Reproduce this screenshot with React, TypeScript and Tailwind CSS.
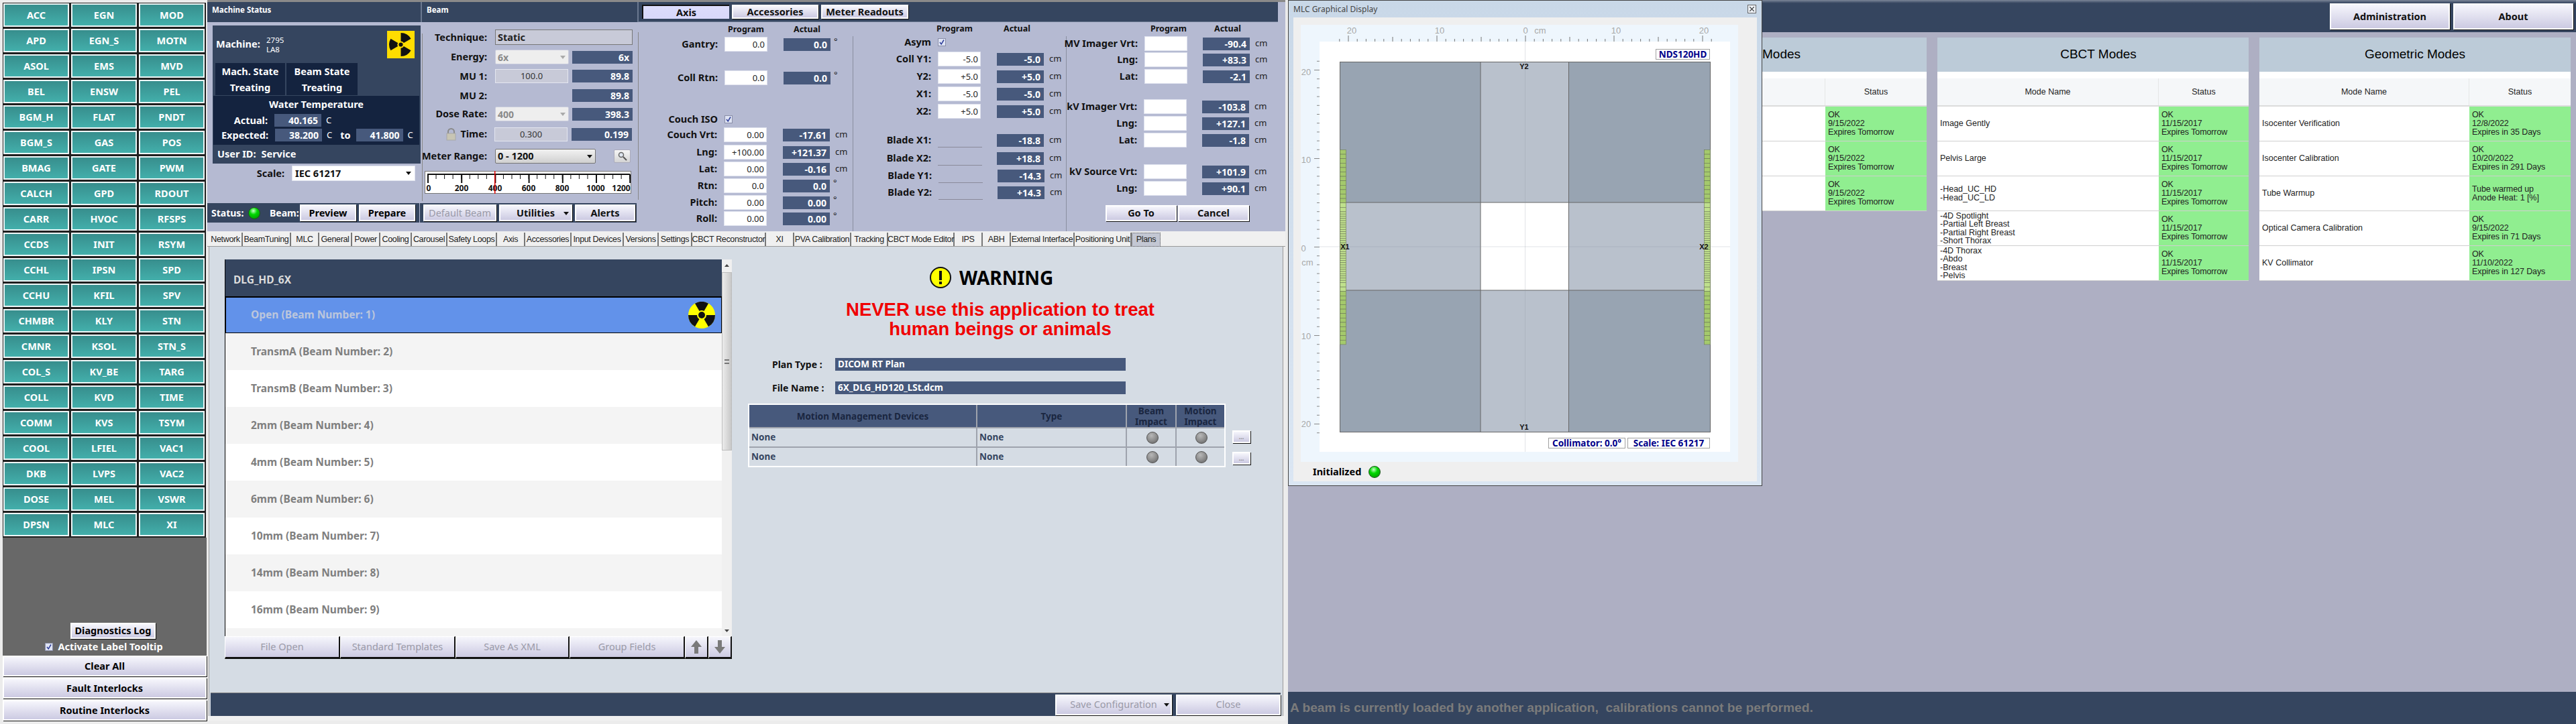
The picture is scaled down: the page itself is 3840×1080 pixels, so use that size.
import React from "react";

const codes = [
  ["ACC", "EGN", "MOD"], ["APD", "EGN_S", "MOTN"], ["ASOL", "EMS", "MVD"], ["BEL", "ENSW", "PEL"],
  ["BGM_H", "FLAT", "PNDT"], ["BGM_S", "GAS", "POS"], ["BMAG", "GATE", "PWM"], ["CALCH", "GPD", "RDOUT"],
  ["CARR", "HVOC", "RFSPS"], ["CCDS", "INIT", "RSYM"], ["CCHL", "IPSN", "SPD"], ["CCHU", "KFIL", "SPV"],
  ["CHMBR", "KLY", "STN"], ["CMNR", "KSOL", "STN_S"], ["COL_S", "KV_BE", "TARG"], ["COLL", "KVD", "TIME"],
  ["COMM", "KVS", "TSYM"], ["COOL", "LFIEL", "VAC1"], ["DKB", "LVPS", "VAC2"], ["DOSE", "MEL", "VSWR"], ["DPSN", "MLC", "XI"],
];

const gbtn = "flex items-center justify-center bg-linear-to-b from-[#f6f6fc] to-[#cccae2] border-2 border-white shadow-[1px_1px_0_#111] font-bold whitespace-nowrap";

function Led({ gray = false }: { gray?: boolean }) {
  return (
    <span
      className={
        gray
          ? "block w-[18px] h-[18px] rounded-full border border-[#555] bg-[radial-gradient(circle_at_40%_30%,#b8b8b8,#8a8a8a_55%,#5f5f5f)]"
          : "block w-[18px] h-[18px] rounded-full border border-[#1a5a1a] bg-[radial-gradient(circle_at_42%_28%,#c8ffc8,#00d800_38%,#008a00)]"
      }
    />
  );
}

function Check() {
  return (
    <svg width="12" height="12" viewBox="0 0 12 12" className="block">
      <rect x="0.5" y="0.5" width="11" height="11" fill="#dfe4f4" stroke="#8a8fa8" />
      <path d="M3 6 L5.2 9 L9 2.5" fill="none" stroke="#2f3f9a" strokeWidth="1.5" />
    </svg>
  );
}

function Arrow({ color = "#111" }: { color?: string }) {
  return (
    <svg width="8" height="5" viewBox="0 0 8 5" className="block">
      <path d="M0 0 H8 L4 5 Z" fill={color} />
    </svg>
  );
}

function Trefoil() {
  const s = (a: number) => {
    const r = (d: number) => (d * Math.PI) / 180;
    const p = (R: number, d: number) => `${20 + R * Math.cos(r(d))} ${20 + R * Math.sin(r(d))}`;
    return `M${p(5, a - 30)} L${p(17, a - 30)} A17 17 0 0 1 ${p(17, a + 30)} L${p(5, a + 30)} A5 5 0 0 0 ${p(5, a - 30)} Z`;
  };
  return (
    <svg width="41" height="41" viewBox="0 0 40 40" className="block">
      <rect width="40" height="40" fill="#ffdd00" />
      {[-60, 60, 180].map((a) => (
        <path key={a} d={s(a)} fill="#111" />
      ))}
      <circle cx="20" cy="20" r="3" fill="#111" />
    </svg>
  );
}

function SmallRad() {
  const r = (d: number) => (d * Math.PI) / 180;
  const sec = (a: number) => {
    const p = (R: number, d: number) => `${20 + R * Math.cos(r(d))} ${20 + R * Math.sin(r(d))}`;
    return `M20 20 L${p(20, a - 30)} A20 20 0 0 1 ${p(20, a + 30)} Z`;
  };
  return (
    <svg width="40" height="40" viewBox="0 0 40 40" className="block">
      <circle cx="20" cy="20" r="20" fill="#ffff00" />
      {[-90, 30, 150].map((a) => (
        <path key={a} d={sec(a)} fill="#111" />
      ))}
      <circle cx="20" cy="20" r="7" fill="#ffff00" />
      <circle cx="20" cy="20" r="5" fill="#111" />
    </svg>
  );
}

function Interlocks() {
  return (
    <div className="w-[309px] shrink-0 h-full flex flex-col pl-1 pt-1 pr-px">
      <div className="flex flex-col">
        {codes.map((row) => (
          <div key={row[0]} className="flex h-[38px]">
            {row.map((c) => (
              <div key={c} className="w-[101px] h-[38px] border-r-2 border-b-2 border-l-[1px] border-t-[1px] border-[#1f1f1f]">
                <div className="h-full bg-linear-to-b from-[#378e8d] to-[#43afab] border-2 border-[#eef7f7] flex items-center justify-center font-bold text-[14.5px] text-white">
                  {c}
                </div>
              </div>
            ))}
          </div>
        ))}
      </div>
      <div className="flex-1 bg-[#686868] flex flex-col items-center justify-end">
        <div className={`${gbtn} w-[127px] h-[24px] ml-[25px] text-[14.5px] text-black`}>Diagnostics Log</div>
        <div className="flex items-center mt-[4px] mb-[5px] h-[16px] gap-[7px] -ml-[2px] text-white font-bold text-[14.5px]">
          <Check />
          <span>Activate Label Tooltip</span>
        </div>
      </div>
      <div className="flex flex-col gap-[2px] mb-[5px]">
        <div className={`${gbtn} h-[31px] text-[14.5px] text-black`}>Clear All</div>
        <div className={`${gbtn} h-[31px] text-[14.5px] text-black`}>Fault Interlocks</div>
        <div className={`${gbtn} h-[31px] text-[14.5px] text-black`}>Routine Interlocks</div>
      </div>
    </div>
  );
}

function MachineCol() {
  return (
    <div className="w-[320px] shrink-0 flex flex-col">
      <div className="h-[30px] bg-[#35455f] border-r-2 border-[#6a7890] pl-[7px] pt-[3px] text-[11.5px] font-bold text-white">Machine Status</div>
      <div className="ml-[8px] mt-[5px] w-[310px] h-[206px] bg-[#35455f] flex flex-col text-white font-bold">
        <div className="h-[56px] flex items-center pl-[5px] pr-[9px]">
          <span className="text-[14.5px] w-[75px]">Machine:</span>
          <div className="flex flex-col gap-[1px] flex-1 font-normal text-[11.5px] leading-[13px]">
            <span>2795</span>
            <span>LA8</span>
          </div>
          <Trefoil />
        </div>
        <div className="flex ml-[4px] gap-[2px] h-[48px]">
          <div className="w-[104px] bg-[#14233f] flex flex-col items-center justify-center gap-[6px] text-[14.5px] leading-[18px]">
            <span>Mach. State</span>
            <span>Treating</span>
          </div>
          <div className="w-[106px] bg-[#14233f] flex flex-col items-center justify-center gap-[6px] text-[14.5px] leading-[18px]">
            <span>Beam State</span>
            <span>Treating</span>
          </div>
        </div>
        <div className="mt-px ml-px w-[307px] h-[73px] bg-[#14233f] text-[14.5px] flex flex-col">
          <div className="h-[26px] flex items-center justify-center">Water Temperature</div>
          <div className="flex items-center h-[21px]">
            <span className="w-[81px] text-right">Actual:</span>
            <span className="ml-[10px] w-[70px] h-[19px] bg-[#47597c] text-right pr-[5px] leading-[19px] text-[14px]">40.165</span>
            <span className="ml-[7px] font-normal text-[13px]">C</span>
          </div>
          <div className="flex items-center h-[23px]">
            <span className="w-[82px] text-right">Expected:</span>
            <span className="ml-[10px] w-[70px] h-[19px] bg-[#47597c] text-right pr-[5px] leading-[19px] text-[14px]">38.200</span>
            <span className="ml-[7px] font-normal text-[13px]">C</span>
            <span className="ml-[12px]">to</span>
            <span className="ml-[8px] w-[70px] h-[19px] bg-[#47597c] text-right pr-[5px] leading-[19px] text-[14px]">41.800</span>
            <span className="ml-[7px] font-normal text-[13px]">C</span>
          </div>
        </div>
        <div className="flex-1 flex items-center pl-[7px] gap-[8px] text-[14.5px]">
          <span>User ID:</span>
          <span>Service</span>
        </div>
      </div>
      <div className="flex items-center h-[23px] mt-[3px]">
        <span className="w-[115px] text-right font-bold text-[14.5px] text-[#111]">Scale:</span>
        <div className="ml-[11px] w-[184px] h-[23px] bg-white border border-[#dfe2ee] flex items-center justify-between pl-[4px] pr-[5px] font-bold text-[14.5px] text-[#111]">
          <span>IEC 61217</span>
          <Arrow />
        </div>
      </div>
      <div className="mt-[33px] w-[316px] h-[29px] bg-[#35455f] flex items-center text-white font-bold text-[14px]">
        <span className="ml-[6px] w-[55px]">Status:</span>
        <Led />
        <span className="ml-[14px] w-[45px] whitespace-nowrap">Beam:</span>
        <div className={`${gbtn} w-[84px] h-[25px] text-black text-[14.5px]`}>Preview</div>
        <div className={`${gbtn} ml-[4px] w-[84px] h-[25px] text-black text-[14.5px]`}>Prepare</div>
      </div>
    </div>
  );
}

function Drop({ children }: { children: React.ReactNode }) {
  return (
    <div className="w-[110px] h-[22px] bg-[#eeeeee] border border-[#c8cbdc] rounded-[2px] flex items-center justify-between pl-[3px] pr-[4px] text-[#8a8a8a] font-bold text-[14px]">
      <span>{children}</span>
      <Arrow color="#aaaaaa" />
    </div>
  );
}

const beamLabel = "w-[97px] shrink-0 flex justify-end whitespace-nowrap font-bold text-[14.5px] text-[#111]";
const beamVal = "ml-[5px] w-[90px] h-[19px] bg-[#47597c] text-white font-bold text-[14px] text-right pr-[5px] leading-[19px]";

function MeterScale() {
  const majors = [0, 1, 2, 3, 4, 5, 6];
  const labels: [string, number][] = [["0", 6], ["200", 55], ["400", 105], ["600", 155], ["800", 205], ["1000", 255], ["1200", 293]];
  return (
    <svg width="308" height="34" className="block ml-[4px] mt-[11px]">
      <rect x="0.5" y="0.5" width="307" height="33" fill="#fff" stroke="#777" />
      <rect x="4" y="4" width="302" height="2" fill="#111" />
      {Array.from({ length: 25 }, (_, i) => (
        <rect key={i} x={4 + i * 12.55} y="5" width="1" height="7" fill="#111" />
      ))}
      {majors.map((i) => (
        <rect key={i} x={4 + i * 50.2} y="5" width="2" height="13" fill="#111" />
      ))}
      {labels.map(([t, x]) => (
        <text key={t} x={x} y="30" textAnchor="middle" fontSize="12" fontWeight="700" fontFamily="Noto Sans" fill="#111">
          {t}
        </text>
      ))}
      <rect x="104" y="0" width="1.5" height="34" fill="#e00000" />
    </svg>
  );
}

function BeamCol() {
  return (
    <div className="w-[323px] shrink-0 flex flex-col">
      <div className="h-[30px] bg-[#35455f] border-r-2 border-[#6a7890] pl-[7px] pt-[3px] text-[11.5px] font-bold text-white">Beam</div>
      <div className="h-[270px] relative">
        <div className="flex items-center h-[23px] mt-[11px]">
          <span className={beamLabel}>Technique:</span>
          <div className="ml-[12px] w-[205px] h-[23px] bg-[#c8cad8] border border-[#777] pl-[3px] font-bold text-[14.5px] text-[#222] leading-[21px]">Static</div>
        </div>
        <div className="flex items-center h-[22px] mt-[7px]">
          <span className={beamLabel}>Energy:</span>
          <div className="ml-[12px]"><Drop>6x</Drop></div>
          <span className={beamVal}>6x</span>
        </div>
        <div className="flex items-center h-[21px] mt-[7px]">
          <span className={beamLabel}>MU 1:</span>
          <div className="ml-[12px] w-[109px] h-[21px] bg-[#c8cad8] border border-[#e4e6f0] text-center text-[13px] text-[#333] leading-[19px]">100.0</div>
          <span className="ml-[6px] w-[90px] h-[19px] bg-[#47597c] text-white font-bold text-[14px] text-right pr-[5px] leading-[19px]">89.8</span>
        </div>
        <div className="flex items-center h-[19px] mt-[9px]">
          <span className={beamLabel}>MU 2:</span>
          <span className="ml-[127px] w-[90px] h-[19px] bg-[#47597c] text-white font-bold text-[14px] text-right pr-[5px] leading-[19px]">89.8</span>
        </div>
        <div className="flex items-center h-[22px] mt-[7px]">
          <span className={beamLabel}>Dose Rate:</span>
          <div className="ml-[12px]"><Drop>400</Drop></div>
          <span className={beamVal}>398.3</span>
        </div>
        <div className="flex items-center h-[22px] mt-[8px]">
          <svg width="15" height="19" viewBox="0 0 15 19" className="ml-[36px] block">
            <path d="M3 9 V5.5 a4.5 4.5 0 0 1 9 0 V9" fill="none" stroke="#8a8a8a" strokeWidth="2" />
            <rect x="1" y="8" width="13" height="10" fill="#c8c5b4" stroke="#a8a8a8" />
          </svg>
          <span className="w-[46px] text-right font-bold text-[14.5px] text-[#111]">Time:</span>
          <div className="ml-[11px] w-[109px] h-[21px] bg-[#c8cad8] border border-[#e4e6f0] text-center text-[13px] text-[#333] leading-[19px]">0.300</div>
          <span className="ml-[6px] w-[90px] h-[19px] bg-[#47597c] text-white font-bold text-[14px] text-right pr-[5px] leading-[19px]">0.199</span>
        </div>
        <div className="flex items-center h-[22px] mt-[11px]">
          <span className={beamLabel}>Meter Range:</span>
          <div className="ml-[12px] w-[150px] h-[22px] rounded-[2px] border border-[#777] bg-linear-to-b from-[#f2f2f2] to-[#d0d0d0] flex items-center justify-between pl-[3px] pr-[4px] font-bold text-[14.5px] text-[#111]">
            <span>0 - 1200</span>
            <Arrow />
          </div>
          <div className="ml-[27px] w-[25px] h-[20px] rounded-[2px] border border-[#aab] bg-linear-to-b from-[#f6f6f6] to-[#d4d4d4] flex items-center justify-center">
            <svg width="14" height="14" viewBox="0 0 14 14">
              <circle cx="5" cy="5" r="3.5" fill="#dfe6f0" stroke="#666" strokeWidth="1.5" />
              <path d="M8 8 L13 13" stroke="#555" strokeWidth="2" />
            </svg>
          </div>
        </div>
        <MeterScale />
        <div className="absolute left-0 top-[17px] h-[250px] w-px bg-[#888]" />
        <div className="absolute right-0 top-[15px] h-[250px] w-px bg-[#888]" />
      </div>
      <div className="-ml-[3px] mt-auto mb-[13px] h-[29px] bg-[#35455f] flex items-center w-[323px] pl-[5px]">
        <div className={`${gbtn} w-[109px] h-[25px] text-[#9a9aa8] font-normal text-[14.5px]`}>Default Beam</div>
        <div className={`${gbtn} ml-[4px] w-[109px] h-[25px] text-[#111] text-[14.5px] relative`}>
          <span>Utilities</span>
          <span className="absolute right-[3px] top-[9px]"><Arrow /></span>
        </div>
        <div className={`${gbtn} ml-[4px] w-[90px] h-[25px] text-[#111] text-[14.5px]`}>Alerts</div>
      </div>
    </div>
  );
}

type RowProps = { label?: string; lw: string; input?: string; val?: string; unit?: string; mt: string; check?: boolean; under?: boolean; vw?: string; gap?: string };

function AxRow({ label, lw, input, val, unit, mt, check, under, vw = "w-[70px]", gap = "ml-[24px]" }: RowProps) {
  return (
    <div className={`flex items-center h-[22px] ${mt}`}>
      <span className={`${lw} shrink-0 flex justify-end whitespace-nowrap font-bold text-[14.5px] text-[#111]`}>{label}</span>
      {check ? (
        <div className="ml-[10px]"><Check /></div>
      ) : under ? (
        <div className="ml-[10px] w-[66px] h-[22px] border-b border-[#8a8a9a]" />
      ) : (
        <div className="ml-[10px] w-[64px] h-[22px] bg-white border border-[#dfe2ee] text-right pr-[3px] text-[13px] leading-[20px] text-[#222]">{input}</div>
      )}
      {val !== undefined && (
        <span className={`${under ? "ml-[22px]" : gap} ${vw} h-[19px] bg-[#47597c] text-white font-bold text-[14px] text-right pr-[5px] leading-[19px]`}>{val}</span>
      )}
      {unit === "cm" && <span className="ml-[8px] text-[13px] text-[#222]">cm</span>}
      {unit === "deg" && <span className="ml-[5px] text-[13px] text-[#222] -mt-[8px]">°</span>}
    </div>
  );
}

function ColHead({ a, b, h, pa, pb }: { a: string; b: string; h: string; pa: string; pb: string }) {
  return (
    <div className={`flex items-center ${h} font-bold text-[12.5px] text-[#111]`}>
      <span className={pa}>{a}</span>
      <span className={pb}>{b}</span>
    </div>
  );
}

function AxisCol() {
  return (
    <div className="flex-1 flex flex-col relative">
      <div className="h-[30px] bg-[#35455f] w-[953px] flex items-center pl-[5px] gap-[4px] border-b border-[#6a7890]">
        <div className="w-[130px] h-[21px] bg-linear-to-b from-[#dcdcfc] to-[#d8d8fa] border-l-2 border-t-2 border-[#111] flex items-center justify-center font-bold text-[14.5px] text-[#111]">Axis</div>
        <div className={`${gbtn} w-[129px] h-[21px] text-[14.5px] text-[#111]`}>Accessories</div>
        <div className={`${gbtn} w-[130px] h-[21px] text-[14.5px] text-[#111]`}>Meter Readouts</div>
      </div>
      <div className="flex flex-1">
        <div className="w-[319px] pt-[1px]">
          <ColHead a="Program" b="Actual" h="h-[21px]" pa="ml-[133px] w-[98px]" pb="" />
          <AxRow label="Gantry:" lw="w-[118px]" input="0.0" val="0.0" unit="deg" mt="" />
          <AxRow label="Coll Rtn:" lw="w-[118px]" input="0.0" val="0.0" unit="deg" mt="mt-[28px]" />
          <AxRow label="Couch ISO" lw="w-[118px]" check mt="mt-[40px]" />
          <AxRow label="Couch Vrt:" lw="w-[117px]" input="0.00" val="-17.61" unit="cm" mt="mt-px" />
          <AxRow label="Lng:" lw="w-[117px]" input="+100.00" val="+121.37" unit="cm" mt="mt-[4px]" />
          <AxRow label="Lat:" lw="w-[117px]" input="0.00" val="-0.16" unit="cm" mt="mt-[3px]" />
          <AxRow label="Rtn:" lw="w-[117px]" input="0.0" val="0.0" unit="deg" mt="mt-[3px]" />
          <AxRow label="Pitch:" lw="w-[117px]" input="0.00" val="0.00" unit="deg" mt="mt-[3px]" />
          <AxRow label="Roll:" lw="w-[117px]" input="0.00" val="0.00" unit="deg" mt="mt-[2px]" />
        </div>
        <div className="w-[318px] pt-[1px] border-l border-[#8a8fa0] h-[291px] mt-[21px]">
          <div className="-mt-[21px]">
            <ColHead a="Program" b="Actual" h="h-[18px]" pa="ml-[124px] w-[100px]" pb="" />
          </div>
          <AxRow label="Asym" lw="w-[116px]" check mt="mt-[0px]" />
          <AxRow label="Coll Y1:" lw="w-[116px]" input="-5.0" val="-5.0" unit="cm" mt="mt-[3px]" />
          <AxRow label="Y2:" lw="w-[116px]" input="+5.0" val="+5.0" unit="cm" mt="mt-[4px]" />
          <AxRow label="X1:" lw="w-[116px]" input="-5.0" val="-5.0" unit="cm" mt="mt-[4px]" />
          <AxRow label="X2:" lw="w-[116px]" input="+5.0" val="+5.0" unit="cm" mt="mt-[4px]" />
          <AxRow label="Blade X1:" lw="w-[116px]" under val="-18.8" unit="cm" mt="mt-[21px]" />
          <AxRow label="Blade X2:" lw="w-[116px]" under val="+18.8" unit="cm" mt="mt-[5px]" />
          <AxRow label="Blade Y1:" lw="w-[117px]" under val="-14.3" unit="cm" mt="mt-[4px]" />
          <AxRow label="Blade Y2:" lw="w-[117px]" under val="+14.3" unit="cm" mt="mt-[3px]" />
        </div>
        <div className="flex-1 border-l border-[#8a8fa0] h-[291px] mt-[21px]">
          <div className="-mt-[21px]">
            <ColHead a="Program" b="Actual" h="h-[21px]" pa="ml-[125px] w-[95px]" pb="" />
          </div>
          <AxRow label="MV Imager Vrt:" lw="w-[106px]" input="" val="-90.4" unit="cm" gap="ml-[23px]" mt="" />
          <AxRow label="Lng:" lw="w-[106px]" input="" val="+83.3" unit="cm" gap="ml-[23px]" mt="mt-[2px]" />
          <AxRow label="Lat:" lw="w-[106px]" input="" val="-2.1" unit="cm" gap="ml-[23px]" mt="mt-[3px]" />
          <AxRow label="kV Imager Vrt:" lw="w-[105px]" input="" val="-103.8" unit="cm" gap="ml-[23px]" mt="mt-[23px]" />
          <AxRow label="Lng:" lw="w-[105px]" input="" val="+127.1" unit="cm" gap="ml-[23px]" mt="mt-[3px]" />
          <AxRow label="Lat:" lw="w-[105px]" input="" val="-1.8" unit="cm" gap="ml-[23px]" mt="mt-[3px]" />
          <AxRow label="kV Source Vrt:" lw="w-[105px]" input="" val="+101.9" unit="cm" gap="ml-[23px]" mt="mt-[25px]" />
          <AxRow label="Lng:" lw="w-[105px]" input="" val="+90.1" unit="cm" gap="ml-[23px]" mt="mt-[3px]" />
          <div className="flex ml-[58px] mt-[14px] gap-[2px]">
            <div className={`${gbtn} w-[106px] h-[24px] text-[14.5px] text-[#111]`}>Go To</div>
            <div className={`${gbtn} w-[106px] h-[24px] text-[14.5px] text-[#111]`}>Cancel</div>
          </div>
        </div>
      </div>
    </div>
  );
}

const tabs: [string, string][] = [
  ["Network", "w-[50px]"], ["BeamTuning", "w-[72px]"], ["MLC", "w-[42px]"], ["General", "w-[49px]"], ["Power", "w-[42px]"],
  ["Cooling", "w-[47px]"], ["Carousel", "w-[53px]"], ["Safety Loops", "w-[74px]"], ["Axis", "w-[42px]"], ["Accessories", "w-[69px]"],
  ["Input Devices", "w-[78px]"], ["Versions", "w-[52px]"], ["Settings", "w-[50px]"], ["CBCT Reconstructor", "w-[110px]"], ["XI", "w-[42px]"],
  ["PVA Calibration", "w-[85px]"], ["Tracking", "w-[55px]"], ["CBCT Mode Editor", "w-[99px]"], ["IPS", "w-[42px]"], ["ABH", "w-[42px]"],
  ["External Interface", "w-[95px]"], ["Positioning Unit", "w-[85px]"],
];

function Tabs() {
  return (
    <div className="h-[23px] bg-[#f0f0f0] flex pl-[3px] border-b border-[#9a9a9a] font-['Liberation_Sans'] text-[12.5px] tracking-[-0.35px] text-[#222]">
      {tabs.map(([t, w]) => (
        <div key={t} className={`${w} h-[20px] mt-[2px] border-r-2 border-[#777] flex items-center justify-center whitespace-nowrap`}>
          {t}
        </div>
      ))}
      <div className="w-[43px] h-[21px] mt-[2px] bg-[#c3c7d3] border border-dotted border-[#555] flex items-center justify-center">Plans</div>
    </div>
  );
}

const beams = [
  ["TransmA (Beam Number: 2)", "bg-[#f4f4f4]"], ["TransmB (Beam Number: 3)", "bg-white"], ["2mm (Beam Number: 4)", "bg-[#f4f4f4]"],
  ["4mm (Beam Number: 5)", "bg-white"], ["6mm (Beam Number: 6)", "bg-[#f4f4f4]"], ["10mm (Beam Number: 7)", "bg-white"],
  ["14mm (Beam Number: 8)", "bg-[#f4f4f4]"], ["16mm (Beam Number: 9)", "bg-white"],
];

const fileBtn = "flex items-center justify-center bg-linear-to-b from-[#f6f6fc] to-[#cccae2] border border-white border-b-[3px] border-b-[#111] border-r-2 border-r-[#111] h-[34px] font-normal text-[14.5px] text-[#9a9aa8]";

function PlanList() {
  return (
    <div className="w-[756px] ml-[23px] mt-[19px] shrink-0 flex flex-col">
      <div className="flex h-[562px]">
        <div className="w-[741px] border-l border-black flex flex-col font-bold text-[15.5px]">
          <div className="h-[56px] shrink-0 bg-[#35455f] border-b border-black pl-[12px] pt-[19px] text-[#dcdcdc]">DLG_HD_6X</div>
          <div className="h-[54px] shrink-0 bg-[#6292ea] border border-black flex items-center pl-[37px] pr-[9px] justify-between text-[#bcc6dc]">
            <span>Open (Beam Number: 1)</span>
            <SmallRad />
          </div>
          {beams.map(([t, c]) => (
            <div key={t} className={`h-[55px] shrink-0 ${c} flex items-center pl-[38px] text-[#7f7f7f]`}>{t}</div>
          ))}
          <div className="flex-1 bg-[#f4f4f4]" />
        </div>
        <div className="w-[15px] bg-[#f0f0f0] flex flex-col items-center relative">
          <svg width="7" height="4" viewBox="0 0 7 4" className="block mt-[7px]"><path d="M3.5 0 L7 4 H0 Z" fill="#444" /></svg>
          <div className="w-[15px] h-[266px] mt-[8px] bg-linear-to-r from-[#ececec] to-[#c8c8c8] border border-[#bdbdbd] flex items-center justify-center">
            <div className="w-[7px] h-[7px] border-y-2 border-[#777]" />
          </div>
          <svg width="7" height="4" viewBox="0 0 7 4" className="block mt-auto mb-[6px]"><path d="M0 0 H7 L3.5 4 Z" fill="#444" /></svg>
        </div>
      </div>
      <div className="flex gap-0">
        <div className={`${fileBtn} w-[172px]`}>File Open</div>
        <div className={`${fileBtn} w-[172px]`}>Standard Templates</div>
        <div className={`${fileBtn} w-[170px]`}>Save As XML</div>
        <div className={`${fileBtn} w-[172px]`}>Group Fields</div>
        <div className={`${fileBtn} w-[35px]`}>
          <svg width="16" height="20" viewBox="0 0 16 20"><path d="M8 0 L16 10 H11 V20 H5 V10 H0 Z" fill="#7a7a7a" /></svg>
        </div>
        <div className={`${fileBtn} w-[35px]`}>
          <svg width="16" height="20" viewBox="0 0 16 20"><path d="M8 20 L16 10 H11 V0 H5 V10 H0 Z" fill="#7a7a7a" /></svg>
        </div>
      </div>
    </div>
  );
}

function Warn() {
  const head = "bg-[#47597c] flex items-center justify-center text-center text-[#1a2640] font-bold text-[13.5px] leading-[16px]";
  const cell = "bg-[#d5dce4] flex items-center pl-[3px] text-[#35455f] font-bold text-[13.5px]";
  return (
    <div className="flex-1 flex flex-col">
      <div className="flex items-center ml-[295px] mt-[30px] h-[32px] gap-[12px]">
        <svg width="32" height="32" viewBox="0 0 32 32" className="block">
          <circle cx="16" cy="16" r="15" fill="#ffff00" stroke="#111" strokeWidth="2" />
          <rect x="14" y="6" width="4" height="14" fill="#111" />
          <rect x="14" y="22" width="4" height="4" fill="#111" />
        </svg>
        <span className="font-bold text-[28px] text-black">WARNING</span>
      </div>
      <div className="mt-[17px] w-[800px] text-center font-['Liberation_Sans'] font-bold text-[27.5px] leading-[29px] text-[#f00000]">
        <div>NEVER use this application to treat</div>
        <div>human beings or animals</div>
      </div>
      <div className="flex items-center mt-[29px] h-[19px]">
        <span className="ml-[60px] w-[94px] font-bold text-[14px] text-[#111]">Plan Type :</span>
        <span className="w-[433px] h-[19px] bg-[#47597c] text-white font-bold text-[13.5px] pl-[4px] leading-[19px]">DICOM RT Plan</span>
      </div>
      <div className="flex items-center mt-[16px] h-[19px]">
        <span className="ml-[60px] w-[94px] font-bold text-[14px] text-[#111]">File Name :</span>
        <span className="w-[433px] h-[19px] bg-[#47597c] text-white font-bold text-[13.5px] pl-[4px] leading-[19px]">6X_DLG_HD120_LSt.dcm</span>
      </div>
      <div className="flex ml-[24px] mt-[14px]">
        <div className="w-[712px] h-[95px] border-2 border-white bg-[#9ea3ad] grid grid-cols-[338px_221px_72px_1fr] grid-rows-[33px_1fr_1fr] gap-[2px]">
          <div className={head}>Motion Management Devices</div>
          <div className={head}>Type</div>
          <div className={head}>Beam<br />Impact</div>
          <div className={head}>Motion<br />Impact</div>
          <div className={cell}>None</div>
          <div className={cell}>None</div>
          <div className={`${cell} justify-center pl-0`}><Led gray /></div>
          <div className={`${cell} justify-center pl-0`}><Led gray /></div>
          <div className={cell}>None</div>
          <div className={cell}>None</div>
          <div className={`${cell} justify-center pl-0`}><Led gray /></div>
          <div className={`${cell} justify-center pl-0`}><Led gray /></div>
        </div>
        <div className="ml-[10px] flex flex-col pt-[40px] gap-[13px]">
          <div className={`${gbtn} w-[27px] h-[19px] text-[9px] text-[#888]`}>...</div>
          <div className={`${gbtn} w-[27px] h-[19px] text-[9px] text-[#888]`}>...</div>
        </div>
      </div>
    </div>
  );
}

function Main() {
  return (
    <div className="w-[1607px] shrink-0 h-full flex flex-col">
      <div className="h-[3px] bg-[#8a8a8a]" />
      <div className="h-[342px] bg-[#b5bad2] flex">
        <MachineCol />
        <BeamCol />
        <AxisCol />
      </div>
      <Tabs />
      <div className="ml-[2px] mr-[3px] border-l border-r border-[#9a9a9a] flex-1 flex flex-col bg-[#d5dce4]">
        <div className="flex-1 flex">
          <PlanList />
          <Warn />
        </div>
        <div className="ml-[2px] mr-[3px] h-[35px] bg-[#35455f] border-t border-[#8a8a8a] flex items-center justify-end gap-[6px] pr-0">
          <div className={`${gbtn} w-[174px] h-[31px] text-[14.5px] text-[#9a9aa8] font-normal relative`}>
            <span>Save Configuration</span>
            <span className="absolute right-[2px] top-[11px]"><Arrow /></span>
          </div>
          <div className={`${gbtn} w-[156px] h-[31px] text-[14.5px] text-[#9a9aa8] font-normal`}>Close</div>
        </div>
      </div>
      <div className="h-[12px] mt-0 border-t-[7px] border-t-[#f0f0f0] bg-[#ececec]" />
    </div>
  );
}

function Chart() {
  const cx = 334.5;
  const cy = 331;
  const tick = (n: number) => (n % 10 === 0 ? 9 : n % 5 === 0 ? 7 : 4);
  const ns = Array.from({ length: 43 }, (_, i) => i - 21);
  const leaves: { y: number; h: number }[] = [];
  let y = 186.5;
  for (let i = 0; i < 60; i++) {
    const h = i < 14 || i >= 46 ? 6.6 : 3.3;
    leaves.push({ y, h });
    y += h;
  }
  const gray = { fill: "#a8a8a8", fontFamily: "Liberation Sans", fontSize: 13 };
  const Lbl = ({ x, t, b }: { x: number; t: string; b: number }) => (
    <text x={x} y={b} textAnchor="middle" {...gray}>{t}</text>
  );
  const Bl = ({ x, yy, t }: { x: number; yy: number; t: string }) => (
    <text x={x} y={yy} textAnchor="middle" fontFamily="Liberation Sans" fontWeight="700" fontSize="11" fill="#111">{t}</text>
  );
  return (
    <svg width="652" height="652" className="block">
      <rect width="652" height="652" fill="#eef6fd" />
      <rect x="28" y="25" width="612" height="612" fill="#fff" />
      <rect x="58.5" y="55.5" width="552" height="552" fill="#98a4b2" />
      <rect x="268" y="55.5" width="131.5" height="552" fill="#b9c1cc" />
      <rect x="58.5" y="265" width="552" height="131" fill="#b9c1cc" />
      <rect x="268" y="265" width="131.5" height="131" fill="#fff" />
      <rect x="58.5" y="55.5" width="552" height="552" fill="none" stroke="#666" />
      <path d="M268 55.5 V607.5 M399.5 55.5 V607.5 M58.5 265 H610.5 M58.5 396 H610.5" stroke="#666" fill="none" />
      <path d={`M${cx} 25 V637 M28 ${cy} H640`} stroke="#8a94a0" strokeOpacity="0.25" fill="none" />
      {[58.5, 601.5].map((lx) =>
        leaves.map((l, i) => (
          <rect key={`${lx}-${i}`} x={lx} y={l.y} width="9" height={l.h} fill={l.y >= 265 && l.y < 396 ? "#bfe08c" : "#a4c96c"} stroke="#6f7a5a" strokeWidth="0.6" />
        ))
      )}
      {ns.map((n) => (
        <rect key={`t${n}`} x={cx + n * 13.2} y={25 - tick(n)} width="1" height={tick(n)} fill="#777" />
      ))}
      {ns.map((n) => (
        <rect key={`l${n}`} x={28 - (n % 10 === 0 ? 8 : 4)} y={cy + n * 13.2} width={n % 10 === 0 ? 8 : 4} height="1" fill="#888" />
      ))}
      <Lbl x={76} t="20" b={13} />
      <Lbl x={207} t="10" b={13} />
      <Lbl x={335} t="0" b={13} />
      <Lbl x={357} t="cm" b={13} />
      <Lbl x={470} t="10" b={13} />
      <Lbl x={601} t="20" b={13} />
      <Lbl x={8} t="20" b={75} />
      <Lbl x={8} t="10" b={206} />
      <Lbl x={4} t="0" b={338} />
      <Lbl x={10} t="cm" b={359} />
      <Lbl x={8} t="10" b={469} />
      <Lbl x={8} t="20" b={600} />
      <Bl x={333} yy={66} t="Y2" />
      <Bl x={333} yy={604} t="Y1" />
      <Bl x={66} yy={335} t="X1" />
      <Bl x={601} yy={335} t="X2" />
    </svg>
  );
}

function MlcWindow() {
  const tag = "absolute bg-white border border-[#a0a0a0] text-[#00008a] font-bold text-[13.5px] leading-[14px] flex items-center justify-center whitespace-nowrap";
  return (
    <div className="absolute left-0 top-0 w-[707px] h-[725px] border border-[#444] bg-linear-to-b from-[#c9d8e8] to-[#dbe6f3] flex flex-col">
      <div className="h-[25px] flex items-center justify-between pl-[7px] pr-[8px] font-['Noto_Sans'] text-[12px] text-[#444]">
        <span>MLC Graphical Display</span>
        <div className="w-[13px] h-[13px] border border-[#666] bg-[#eef2f8] flex items-center justify-center">
          <svg width="7" height="7" viewBox="0 0 7 7"><path d="M0 0 L7 7 M7 0 L0 7" stroke="#333" strokeWidth="1.2" /></svg>
        </div>
      </div>
      <div className="mx-[7px] h-[692px] bg-[#efefef] pl-[11px] pt-[11px] flex flex-col">
        <div className="relative w-[652px] h-[652px]">
          <Chart />
          <div className={`${tag} left-[529px] top-[36px] w-[81px] h-[16px]`}>NDS120HD</div>
          <div className={`${tag} left-[369px] top-[616px] w-[115px] h-[16px]`}>Collimator: 0.0°</div>
          <div className={`${tag} left-[487px] top-[616px] w-[123px] h-[16px]`}>Scale: IEC 61217</div>
        </div>
        <div className="flex items-center h-[29px] pl-[18px]">
          <span className="w-[83px] font-bold text-[14.5px] text-black">Initialized</span>
          <Led />
        </div>
      </div>
    </div>
  );
}

function StatusCell({ lines, cls }: { lines: string[]; cls: string }) {
  return (
    <div className={`${cls} h-full bg-[#90ee90] pl-[4px] flex flex-col justify-center text-[12.5px] leading-[13px] tracking-[-0.1px] text-[#222]`}>
      {lines.map((l) => <span key={l}>{l}</span>)}
    </div>
  );
}

type Md = { title: string; titleCls: string; nameW: string; statW: string; rows: { name: string[]; status: string[] }[] };

function ModeTable({ title, titleCls, nameW, statW, rows }: Md) {
  return (
    <div className="w-[464px] shrink-0 flex flex-col font-['Liberation_Sans'] text-[#222]">
      <div className={`h-[51px] bg-[#bccbd8] flex items-center text-[19px] text-black ${titleCls}`}>{title}</div>
      <div className="h-[10px] bg-white" />
      <div className="h-[42px] flex bg-[#f5f7f9] border-b-2 border-[#dcdcdc] text-[12.5px]">
        <div className={`${nameW} flex items-center justify-center border-r border-[#e6e6e6]`}>Mode Name</div>
        <div className={`${statW} flex items-center justify-center`}>Status</div>
      </div>
      {rows.map((r, i) => (
        <div key={i} className="h-[52px] flex bg-white border-b border-[#cfcfcf]">
          <div className={`${nameW} pl-[4px] flex flex-col justify-center text-[12.5px] leading-[12.5px]`}>
            {r.name.map((n) => <span key={n}>{n}</span>)}
          </div>
          <StatusCell lines={r.status} cls={statW} />
        </div>
      ))}
    </div>
  );
}

const tom = (d: string) => ["OK", d, "Expires Tomorrow"];

function RightApp() {
  return (
    <div className="w-[1920px] shrink-0 h-full flex flex-col bg-[#aeafc3] relative">
      <div className="h-[48px] shrink-0 bg-linear-to-b from-[#7d8798] from-0% via-[#35455f] via-10% to-[#35455f] flex items-center justify-end pr-[4px] gap-[5px] pt-[1px]">
        <div className={`${gbtn} w-[179px] h-[39px] text-[14.5px] text-[#111]`}>Administration</div>
        <div className={`${gbtn} w-[179px] h-[39px] text-[14.5px] text-[#111]`}>About</div>
      </div>
      <div className="flex gap-[16px] pl-[488px] mt-[8px]">
        <ModeTable
          title="Modes"
          titleCls="pl-[219px]"
          nameW="w-[313px]"
          statW="w-[151px]"
          rows={[
            { name: [], status: tom("9/15/2022") },
            { name: [], status: tom("9/15/2022") },
            { name: [], status: tom("9/15/2022") },
          ]}
        />
        <ModeTable
          title="CBCT Modes"
          titleCls="justify-center pl-[16px]"
          nameW="w-[330px]"
          statW="w-[134px]"
          rows={[
            { name: ["Image Gently"], status: tom("11/15/2017") },
            { name: ["Pelvis Large"], status: tom("11/15/2017") },
            { name: ["-Head_UC_HD", "-Head_UC_LD"], status: tom("11/15/2017") },
            { name: ["-4D Spotlight", "-Partial Left Breast", "-Partial Right Breast", "-Short Thorax"], status: tom("11/15/2017") },
            { name: ["-4D Thorax", "-Abdo", "-Breast", "-Pelvis"], status: tom("11/15/2017") },
          ]}
        />
        <ModeTable
          title="Geometric Modes"
          titleCls="justify-center"
          nameW="w-[313px]"
          statW="w-[151px]"
          rows={[
            { name: ["Isocenter Verification"], status: ["OK", "12/8/2022", "Expires in 35 Days"] },
            { name: ["Isocenter Calibration"], status: ["OK", "10/20/2022", "Expires in 291 Days"] },
            { name: ["Tube Warmup"], status: ["Tube warmed up", "Anode Heat: 1 [%]"] },
            { name: ["Optical Camera Calibration"], status: ["OK", "9/15/2022", "Expires in 71 Days"] },
            { name: ["KV Collimator"], status: ["OK", "11/10/2022", "Expires in 127 Days"] },
          ]}
        />
      </div>
      <div className="mt-auto h-[48px] bg-[#35455f] flex items-center pl-[3px] font-['Liberation_Sans'] font-bold text-[19.2px] text-[#7b7b7b] whitespace-pre">
        A beam is currently loaded by another application,  calibrations cannot be performed.
      </div>
      <MlcWindow />
    </div>
  );
}

export default function App() {
  return (
    <div className="w-[3840px] h-[1080px] overflow-hidden flex bg-[#ececec] font-['Noto_Sans',sans-serif]">
      <div className="w-[1920px] shrink-0 h-full flex bg-[#ececec]">
        <Interlocks />
        <Main />
      </div>
      <RightApp />
    </div>
  );
}
